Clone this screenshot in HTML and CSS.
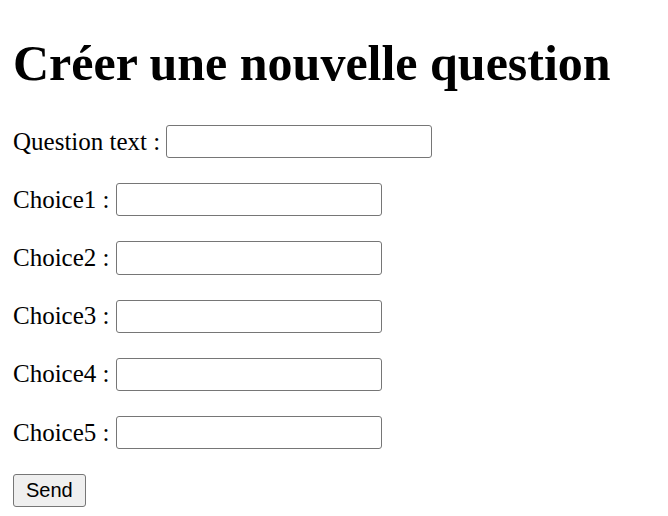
FILE: index.html
```html
<!DOCTYPE html>
<html lang="fr">
<head>
<meta charset="utf-8">
<title>Créer une nouvelle question</title>
<link rel="stylesheet" href="styles.css">
</head>
<body>
<h1 class="title">Créer une nouvelle question</h1>
<form class="form">
  <p class="row"><label class="label">Question text :</label><input class="field" type="text"></p>
  <p class="row"><label class="label">Choice1 :</label><input class="field" type="text"></p>
  <p class="row"><label class="label">Choice2 :</label><input class="field" type="text"></p>
  <p class="row"><label class="label">Choice3 :</label><input class="field" type="text"></p>
  <p class="row"><label class="label">Choice4 :</label><input class="field" type="text"></p>
  <p class="row"><label class="label">Choice5 :</label><input class="field" type="text"></p>
  <button class="send" type="submit">Send</button>
</form>
</body>
</html>
```

FILE: styles.css
```css
html { background: #fff; }
body {
  margin: 12px 13px;
  font-family: "Liberation Serif", "Times New Roman", serif;
  font-size: 25px;
  color: #000;
}
.title {
  font-size: 50px;
  font-weight: bold;
  margin: 21.5px 0 33.5px;
}
.row {
  display: flex;
  align-items: center;
  gap: 6px;
  margin: 25px 0;
}
.field {
  box-sizing: border-box;
  width: 266px;
  height: 33.2px;
  border: 1px solid #767676;
  border-radius: 3px;
  padding: 1px 3px;
  font-size: 20px;
  font-family: "Liberation Sans", Arial, sans-serif;
  background: #fff;
}
.send {
  box-sizing: border-box;
  height: 33px;
  padding: 0 12px;
  font-family: "Liberation Sans", Arial, sans-serif;
  font-size: 20px;
  color: #000;
  background: #efefef;
  border: 1px solid #767676;
  border-radius: 3px;
}
```
